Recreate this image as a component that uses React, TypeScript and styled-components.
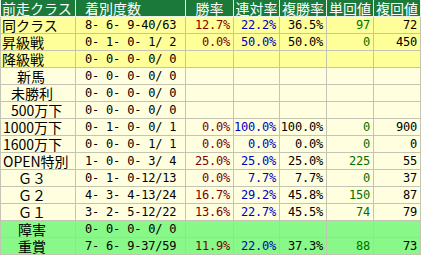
import React from "react";
import styled, { createGlobalStyle } from "styled-components";

const Global = createGlobalStyle`
  html, body { margin: 0; padding: 0; background: #ffffff; }
  body { font-family: "Noto Sans CJK JP", "DejaVu Sans", sans-serif; }
`;

const Table = styled.table`
  border-collapse: collapse;
  table-layout: fixed;
  width: 420px;
  font-family: "Noto Sans CJK JP", sans-serif;
  font-size: 14px;
  line-height: 16px;
`;

const HeadCell = styled.th<{ $align?: string; $pl?: number }>`
  background: #1b7a3a;
  color: #ffffff;
  font-weight: normal;
  height: 16px;
  padding: 0 0 0 ${(p) => p.$pl ?? 0}px;
  border: 1px solid #e8f0e8;
  border-top: none;
  text-align: ${(p) => p.$align ?? "center"};
  white-space: nowrap;
  overflow: hidden;
  font-size: 14px;
`;

type Tone = "yellow" | "cream" | "green";
const bgs: Record<Tone, string> = {
  yellow: "#ffff99",
  cream: "#ffffe0",
  green: "#88f888",
};

const Cell = styled.td<{ $tone: Tone; $pl?: number }>`
  background: ${(p) => bgs[p.$tone]};
  color: #000;
  height: 16px;
  padding: 0 0 0 ${(p) => p.$pl ?? 0}px;
  border: 1px solid #c4c4b4;
  text-align: left;
  white-space: pre;
  overflow: hidden;
`;

const NumCell = styled.td<{ $tone: Tone; $align?: string; $pl?: number; $color?: string }>`
  background: ${(p) => bgs[p.$tone]};
  color: ${(p) => p.$color ?? "#000"};
  height: 16px;
  padding: 0 ${(p) => (p.$align === "right" ? 3 : 0)}px 0 ${(p) => p.$pl ?? 0}px;
  border: 1px solid #c4c4b4;
  text-align: ${(p) => p.$align ?? "left"};
  white-space: pre;
  overflow: hidden;
  font-family: "DejaVu Sans Mono", monospace;
  font-size: 12px;
  letter-spacing: -0.2px;
`;

type Row = {
  name: string;
  indent: number;
  tone: Tone;
  rec: string;
  win: string;
  ren: string;
  fuku: string;
  tan: string;
  fk: string;
};

const rows: Row[] = [
  { name: "同クラス", indent: 1, tone: "yellow", rec: "8- 6- 9-40/63", win: "12.7%", ren: "22.2%", fuku: "36.5%", tan: "97", fk: "72" },
  { name: "昇級戦", indent: 1, tone: "yellow", rec: "0- 1- 0- 1/ 2", win: "0.0%", ren: "50.0%", fuku: "50.0%", tan: "0", fk: "450" },
  { name: "降級戦", indent: 1, tone: "yellow", rec: "0- 0- 0- 0/ 0", win: "", ren: "", fuku: "", tan: "", fk: "" },
  { name: "新馬", indent: 16, tone: "cream", rec: "0- 0- 0- 0/ 0", win: "", ren: "", fuku: "", tan: "", fk: "" },
  { name: "未勝利", indent: 10, tone: "cream", rec: "0- 0- 0- 0/ 0", win: "", ren: "", fuku: "", tan: "", fk: "" },
  { name: "500万下", indent: 10, tone: "cream", rec: "0- 0- 0- 0/ 0", win: "", ren: "", fuku: "", tan: "", fk: "" },
  { name: "1000万下", indent: 2, tone: "cream", rec: "0- 1- 0- 0/ 1", win: "0.0%", ren: "100.0%", fuku: "100.0%", tan: "0", fk: "900" },
  { name: "1600万下", indent: 2, tone: "cream", rec: "0- 0- 0- 1/ 1", win: "0.0%", ren: "0.0%", fuku: "0.0%", tan: "0", fk: "0" },
  { name: "OPEN特別", indent: 2, tone: "cream", rec: "1- 0- 0- 3/ 4", win: "25.0%", ren: "25.0%", fuku: "25.0%", tan: "225", fk: "55" },
  { name: "Ｇ３", indent: 17, tone: "cream", rec: "0- 1- 0-12/13", win: "0.0%", ren: "7.7%", fuku: "7.7%", tan: "0", fk: "37" },
  { name: "Ｇ２", indent: 17, tone: "cream", rec: "4- 3- 4-13/24", win: "16.7%", ren: "29.2%", fuku: "45.8%", tan: "150", fk: "87" },
  { name: "Ｇ１", indent: 17, tone: "cream", rec: "3- 2- 5-12/22", win: "13.6%", ren: "22.7%", fuku: "45.5%", tan: "74", fk: "79" },
  { name: "障害", indent: 17, tone: "green", rec: "0- 0- 0- 0/ 0", win: "", ren: "", fuku: "", tan: "", fk: "" },
  { name: "重賞", indent: 17, tone: "green", rec: "7- 6- 9-37/59", win: "11.9%", ren: "22.0%", fuku: "37.3%", tan: "88", fk: "73" },
];

export default function App() {
  return (
    <>
      <Global />
      <Table>
        <colgroup>
          <col style={{ width: 75 }} />
          <col style={{ width: 110 }} />
          <col style={{ width: 48 }} />
          <col style={{ width: 46 }} />
          <col style={{ width: 47 }} />
          <col style={{ width: 47 }} />
          <col style={{ width: 47 }} />
        </colgroup>
        <thead>
          <tr>
            <HeadCell $align="left" $pl={1}>前走クラス</HeadCell>
            <HeadCell $align="left" $pl={9}>着別度数</HeadCell>
            <HeadCell>勝率</HeadCell>
            <HeadCell>連対率</HeadCell>
            <HeadCell>複勝率</HeadCell>
            <HeadCell>単回値</HeadCell>
            <HeadCell>複回値</HeadCell>
          </tr>
        </thead>
        <tbody>
          {rows.map((r) => (
            <tr key={r.name}>
              <Cell $tone={r.tone} $pl={r.indent}>{r.name}</Cell>
              <NumCell $tone={r.tone} $pl={9}>{r.rec}</NumCell>
              <NumCell $tone={r.tone} $align="right" $color="#800000">{r.win}</NumCell>
              <NumCell $tone={r.tone} $align="right" $color="#0000c0">{r.ren}</NumCell>
              <NumCell $tone={r.tone} $align="right">{r.fuku}</NumCell>
              <NumCell $tone={r.tone} $align="right" $color="#007000">{r.tan}</NumCell>
              <NumCell $tone={r.tone} $align="right">{r.fk}</NumCell>
            </tr>
          ))}
        </tbody>
      </Table>
    </>
  );
}
